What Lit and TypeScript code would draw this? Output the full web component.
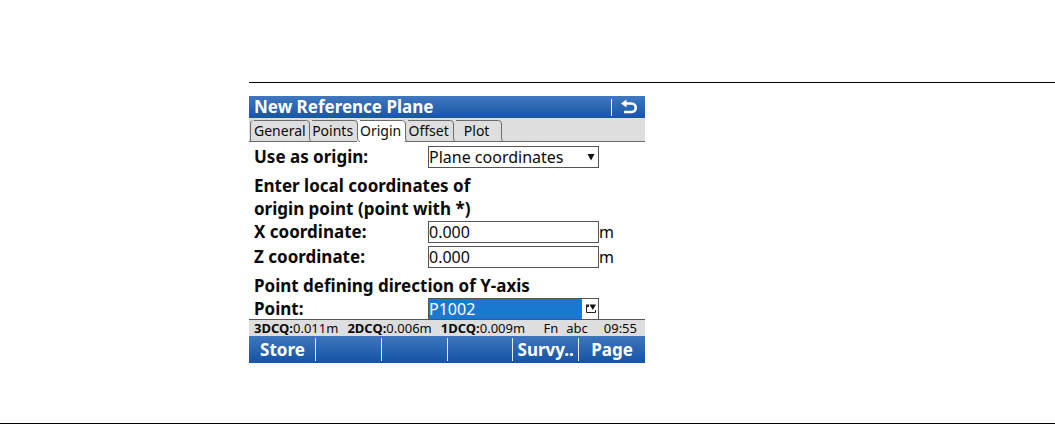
import { LitElement, html, css, svg } from "lit";
import { customElement, state } from "lit/decorators.js";
import { classMap } from "lit/directives/class-map.js";

const TABS = ["General", "Points", "Origin", "Offset", "Plot"];
const SOFT_KEYS = ["Store", "", "", "", "Survy..", "Page"];
const QUALITY = [
  { name: "3DCQ:", value: "0.011m" },
  { name: "2DCQ:", value: "0.006m" },
  { name: "1DCQ:", value: "0.009m" },
];

const tabEdge = svg`<path d="M0 .5h1.5Q4.500.5 4.500 4V17Q4.500 21.500 7 21.500"
  fill="none" stroke="#6b6b6b"></path>`;

@customElement("app-root")
export class AppRoot extends LitElement {
  @state() private active = "Origin";

  static styles = css`
    :host {
      display: block;
      box-sizing: border-box;
      min-height: 100vh;
      padding-top: 82px;
      background: #fff;
      color: #0a0a0a;
      font: 14px/20px "Noto Sans", "Open Sans", sans-serif;
      border-bottom: 1px solid #000;
    }
    * {
      box-sizing: border-box;
    }
    button, input, select {
      font: inherit;
      color: inherit;
      margin: 0;
      border: 0;
      border-radius: 0;
      padding: 0;
      background: none;
      outline: none;
    }
    .sheet {
      margin-left: 249px;
      border-top: 1px solid #000;
      padding-top: 13px;
    }
    .device {
      display: flex;
      flex-direction: column;
      width: 100%;
      max-width: 396px;
    }
    .title {
      display: flex;
      align-items: center;
      height: 22px;
      padding: 0 7px 0 5px;
      color: #fff;
      background: linear-gradient(#4078bf, #1755a8);
    }
    .title h1 {
      flex: 1;
      margin: 0;
      font-size: 17px;
      line-height: 22px;
      font-weight: 700;
    }
    .back {
      display: flex;
      align-items: center;
      height: 17px;
      padding-left: 8px;
      border-left: 1px solid #fff;
    }
    .tabs {
      display: flex;
      height: 24px;
      padding: 2px 0 0 1px;
      background: linear-gradient(#6b6b6b, #6b6b6b) bottom / 100% 1px no-repeat #dedede;
    }
    .tab {
      position: relative;
      min-width: 48px;
      padding: 0 3px;
      text-align: center;
      line-height: 20px;
      white-space: nowrap;
      background: linear-gradient(#6b6b6b, #6b6b6b) 3px 0 / calc(100% - 7px) 1px no-repeat;
    }
    .tab:first-child {
      border-left: 1px solid #6b6b6b;
      border-top-left-radius: 4px;
    }
    .tab.on {
      background-color: #fff;
    }
    .tab svg {
      position: absolute;
      right: -3px;
      top: 0;
      z-index: 1;
    }
    .form {
      display: flex;
      flex-direction: column;
      padding: 3px 0 0 5px;
    }
    .row {
      display: grid;
      grid-template-columns: 174px 171px 1fr;
      align-items: center;
      height: 22px;
    }
    .row + .row {
      margin-top: 3px;
    }
    .form label, .note {
      margin: 0;
      font-size: 17px;
      line-height: 23px;
      font-weight: 700;
    }
    .note {
      max-width: 240px;
      margin-top: 7px;
    }
    .note.wide {
      max-width: none;
    }
    .field {
      position: relative;
      display: flex;
      height: 22px;
    }
    .field input, .field select {
      width: 100%;
      height: 100%;
      border: 1px solid #555;
      padding: 0;
      font-size: 16px;
      line-height: 20px;
      appearance: none;
      background: #fff;
    }
    .field svg {
      position: absolute;
      top: 0;
      right: 1px;
      pointer-events: none;
    }
    .field select.picked {
      color: #fff;
      background: linear-gradient(90deg, #1a78d0 calc(100% - 16px), #fff calc(100% - 16px));
    }
    .unit {
      font-size: 16px;
      line-height: 22px;
    }
    .status {
      display: flex;
      height: 17px;
      padding: 0 8px 0 5px;
      border-top: 1px solid #555;
      background: #dedede;
      font-size: 13px;
      line-height: 17px;
      white-space: nowrap;
    }
    .quality {
      display: flex;
      flex: 1;
      gap: 9px;
    }
    .modes {
      display: flex;
      gap: 8px;
    }
    .clock {
      margin-left: 16px;
    }
    .keys {
      display: grid;
      grid-template-columns: repeat(6, 1fr);
      height: 27px;
      padding: 2px 0 2px 1px;
      color: #fff;
      background: linear-gradient(#3f76bd, #1553a6);
    }
    .key {
      font-size: 17px;
      line-height: 23px;
      font-weight: 700;
      border-right: 1px solid #e4ecf6;
    }
    .key:last-child {
      border-right: 0;
    }
  `;

  render() {
    return html`
      <main class="sheet">
        <section class="device">
          <header class="title">
            <h1>New Reference Plane</h1>
            <button class="back" aria-label="Back">
              <svg width="18" height="16" viewBox="0 0 18 16" fill="none" stroke="#fff">
                <path d="M5 4.500H11.500A4.200 4.200 0 0 1 11.500 13H4" stroke-width="2.600"></path>
                <path d="M6.500 .5V8.500L1 4.500Z" fill="#fff" stroke="none"></path>
              </svg>
            </button>
          </header>
          <nav class="tabs" role="tablist">
            ${TABS.map(
              (name) => html`<button
                role="tab"
                class=${classMap({ tab: true, on: name === this.active })}
                aria-selected=${name === this.active}
                @click=${() => (this.active = name)}
              >${name}<svg width="7" height="22" viewBox="0 0 7 22">${tabEdge}</svg></button>`
            )}
          </nav>
          <form class="form" @submit=${(e: Event) => e.preventDefault()}>
            <div class="row">
              <label for="origin">Use as origin:</label>
              <div class="field">
                <select id="origin"><option>Plane coordinates</option></select>
                <svg width="14" height="22"><path d="M3.500 8H10.500L7 14.500Z" fill="#111"></path></svg>
              </div>
            </div>
            <p class="note">Enter local coordinates of origin point (point with *)</p>
            <div class="row">
              <label for="x">X coordinate:</label>
              <div class="field"><input id="x" value="0.000" /></div>
              <span class="unit">m</span>
            </div>
            <div class="row">
              <label for="z">Z coordinate:</label>
              <div class="field"><input id="z" value="0.000" /></div>
              <span class="unit">m</span>
            </div>
            <p class="note wide">Point defining direction of Y-axis</p>
            <div class="row">
              <label for="point">Point:</label>
              <div class="field">
                <select id="point" class="picked"><option>P1002</option></select>
                <svg width="15" height="22" fill="none" stroke="#222">
                  <path d="M3.500 8V14.500H12.500V12"></path>
                  <path d="M3 6.500H6V9H3Z" fill="#222" stroke="none"></path>
                  <path d="M6.500 6.500H13L9.800 12Z" fill="#111" stroke="none"></path>
                </svg>
              </div>
            </div>
          </form>
          <div class="status">
            <div class="quality">
              ${QUALITY.map((q) => html`<span><b>${q.name}</b>${q.value}</span>`)}
            </div>
            <div class="modes"><span>Fn</span><span>abc</span></div>
            <time class="clock">09:55</time>
          </div>
          <footer class="keys">
            ${SOFT_KEYS.map(
              (k, i) => html`<button class="key" aria-label=${k || `Soft key ${i + 1}`}>${k}</button>`
            )}
          </footer>
        </section>
      </main>
    `;
  }
}
